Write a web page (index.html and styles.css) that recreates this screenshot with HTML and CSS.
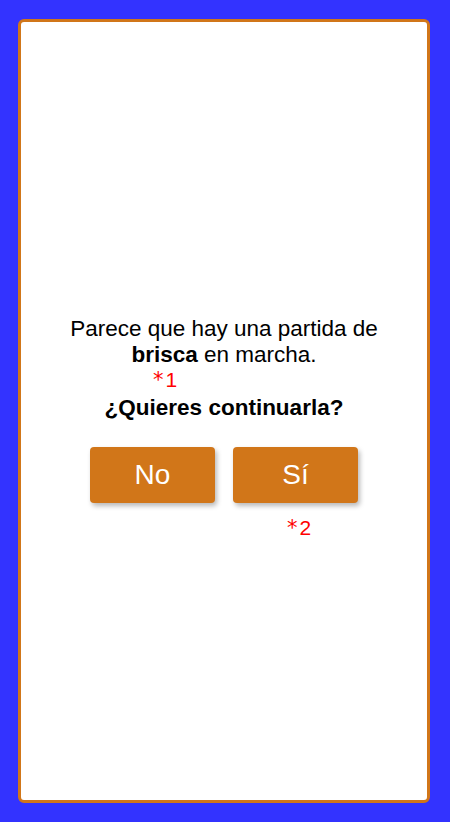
FILE: index.html
```html
<!DOCTYPE html>
<html lang="es">
<head>
<meta charset="utf-8">
<title>Brisca</title>
<link rel="stylesheet" href="styles.css">
</head>
<body>
<div class="card">
  <div class="content">
    <p class="msg">Parece que hay una partida de <b>brisca</b> en marcha.</p>
    <p class="question">¿Quieres continuarla?</p>
    <div class="buttons">
      <button class="btn">No</button>
      <button class="btn">Sí</button>
    </div>
  </div>
  <span class="note note-1"><span class="ast">*</span>1</span>
  <span class="note note-2"><span class="ast">*</span>2</span>
</div>
</body>
</html>
```
FILE: styles.css
```css
html, body {
  margin: 0;
  padding: 0;
  height: 100%;
}
body {
  background: #3333ff;
  font-family: "Liberation Sans", Arial, sans-serif;
  padding: 19px 20px 19px 18px;
  box-sizing: border-box;
}
.card {
  position: relative;
  height: 100%;
  box-sizing: border-box;
  background: #ffffff;
  border: 3px solid #d17619;
  border-radius: 6px;
  display: flex;
  align-items: center;
  justify-content: center;
}
.content {
  display: flex;
  flex-direction: column;
  align-items: center;
  text-align: center;
  margin-top: -1px;
  margin-bottom: 2px;
}
.msg {
  margin: 0;
  width: 345px;
  font-size: 22.5px;
  color: #000;
}
.question {
  margin: 27px 0 0;
  font-size: 22.5px;
  font-weight: bold;
  color: #000;
}
.buttons {
  display: flex;
  gap: 18px;
  margin-top: 26px;
}
.btn {
  width: 125px;
  height: 56px;
  border: none;
  border-radius: 4px;
  background: #d17619;
  color: #ffffff;
  font-family: "Liberation Sans", Arial, sans-serif;
  font-size: 28px;
  padding: 0;
  box-shadow: 2px 3px 5px rgba(0, 0, 0, 0.28);
}
.note {
  position: absolute;
  color: #ff0000;
  font-size: 21px;
  line-height: 21px;
  white-space: nowrap;
}
.ast {
  font-family: "DejaVu Sans", sans-serif;
  margin-right: 2px;
}
.note-1 {
  left: 132px;
  top: 347px;
}
.note-2 {
  left: 266px;
  top: 495px;
}
```
